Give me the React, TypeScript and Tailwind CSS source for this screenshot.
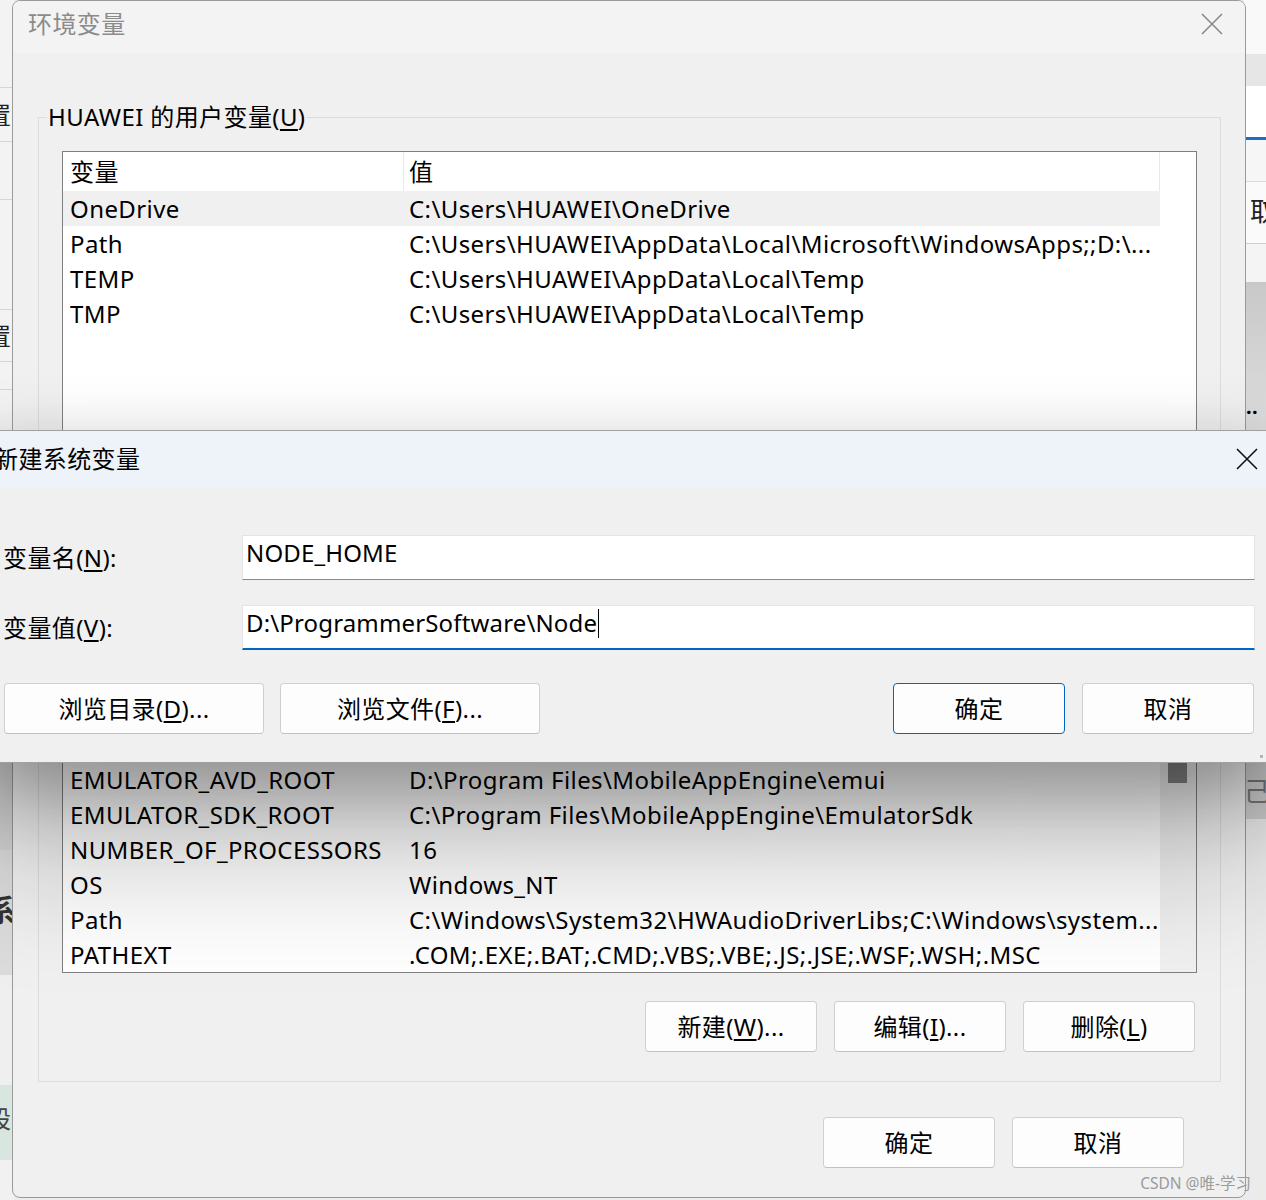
import React from 'react';

const F = "font-['Noto_Sans','Noto_Sans_CJK_SC',sans-serif]";

const userRows: [string, string][] = [
  ['OneDrive', 'C:\\Users\\HUAWEI\\OneDrive'],
  ['Path', 'C:\\Users\\HUAWEI\\AppData\\Local\\Microsoft\\WindowsApps;;D:\\...'],
  ['TEMP', 'C:\\Users\\HUAWEI\\AppData\\Local\\Temp'],
  ['TMP', 'C:\\Users\\HUAWEI\\AppData\\Local\\Temp'],
];

const systemRows: [string, string][] = [
  ['ComSpec', 'C:\\Windows\\system32\\cmd.exe'],
  ['DriverData', 'C:\\Windows\\System32\\Drivers\\DriverData'],
  ['EMULATOR_ADB', 'D:\\Program Files\\MobileAppEngine\\adb'],
  ['EMULATOR_ADB_PATH', 'D:\\Program Files\\MobileAppEngine'],
  ['EMULATOR_APP_ROOT', 'D:\\Program Files\\MobileAppEngine'],
  ['EMULATOR_AVD_ROOT', 'D:\\Program Files\\MobileAppEngine\\emui'],
  ['EMULATOR_SDK_ROOT', 'C:\\Program Files\\MobileAppEngine\\EmulatorSdk'],
  ['NUMBER_OF_PROCESSORS', '16'],
  ['OS', 'Windows_NT'],
  ['Path', 'C:\\Windows\\System32\\HWAudioDriverLibs;C:\\Windows\\system...'],
  ['PATHEXT', '.COM;.EXE;.BAT;.CMD;.VBS;.VBE;.JS;.JSE;.WSF;.WSH;.MSC'],
];

const CloseIcon = ({ color }: { color: string }) => (
  <svg width="22" height="22" viewBox="0 0 22 22">
    <path d="M1 1L21 21M21 1L1 21" stroke={color} strokeWidth="1.6" fill="none" />
  </svg>
);

const Btn = ({ children, w, primary }: { children: React.ReactNode; w: string; primary?: boolean }) => (
  <button
    className={`${w} flex h-[51px] shrink-0 items-center justify-center rounded-[4px] border bg-[#fdfdfd] text-[24px] text-black ${
      primary ? 'border-[#0067c0]' : 'border-[#d0d0d0] border-b-[#c2c2c2]'
    }`}
  >
    {children}
  </button>
);

const ListBox = ({
  rows,
  height,
  selected,
  scroll,
}: {
  rows: [string, string][];
  height: string;
  selected?: number;
  scroll?: boolean;
}) => (
  <div className={`${height} flex overflow-hidden border border-[#7f7f7f] bg-white text-[24px] text-black`}>
    <div className="w-[1097px] shrink-0">
      <div className="flex h-[39px] items-center border-r border-[#e8e8e8]">
        <div className="flex h-full w-[341px] items-center border-r border-[#e8e8e8] pl-[7px]">变量</div>
        <div className="pl-[5px]">值</div>
      </div>
      {rows.map(([k, v], i) => (
        <div key={k + i} className={`flex h-[35px] items-center whitespace-nowrap ${i === selected ? 'bg-[#f0f0f0]' : ''}`}>
          <div className="w-[341px] shrink-0 pl-[7px]">{k}</div>
          <div className="pl-[5px]">{v}</div>
        </div>
      ))}
    </div>
    <div className={`relative flex-1 ${scroll ? 'bg-[#f0f0f0]' : ''}`}>
      {scroll && <div className="absolute left-[8px] top-[150px] h-[85px] w-[19px] bg-[#858585]" />}
    </div>
  </div>
);

export default function App() {
  return (
    <div className={`relative h-[1200px] w-[1266px] overflow-hidden bg-[#ececec] tracking-[0.4px] ${F}`}>
      {/* window behind, left edge */}
      <div className="absolute left-0 top-0 flex h-full w-[14px] flex-col bg-[#f3f3f3] text-[24px] text-[#222]">
        <div className="h-[88px] border-b border-[#d6d6d6]" />
        <div className="ml-[-13px] h-[54px] border-b border-[#d6d6d6] leading-[54px]">置</div>
        <div className="h-[58px] border-b border-[#d6d6d6]" />
        <div className="h-[110px] border-b border-[#d6d6d6]" />
        <div className="ml-[-13px] h-[52px] border-b border-[#d6d6d6] leading-[52px]">置</div>
        <div className="h-[28px] border-b border-[#d6d6d6]" />
        <div className="h-[370px]" />
        <div className="h-[90px] bg-[#d4d4d4]" />
        <div className="ml-[-14px] h-[125px] bg-[#dcdcdc] pt-[40px] text-[30px] font-bold leading-[40px] text-[#333]">系</div>
        <div className="h-[110px] bg-[#efefef]" />
        <div className="ml-[-13px] h-[75px] bg-[#d8e6df] pt-[14px] leading-[40px] text-[#444]">設</div>
        <div className="flex-1 bg-[#f1f1f1]" />
      </div>

      {/* window behind, right edge */}
      <div className="absolute right-0 top-0 flex h-full w-[22px] flex-col bg-[#f7f7f7]">
        <div className="h-[54px] bg-[#f9f9f9]" />
        <div className="h-[32px] bg-[#e6e6e6]" />
        <div className="h-[51px] bg-white" />
        <div className="h-[3px] bg-[#1a6fc4]" />
        <div className="h-[42px] border-b border-[#dcdcdc] bg-[#f6f6f6]" />
        <div className="h-[62px] border-b border-[#d0d0d0] bg-[#fafafa] pl-[6px] font-['Liberation_Serif','Noto_Sans_CJK_SC',serif] text-[26px] leading-[62px] text-[#222]">取</div>
        <div className="h-[38px] bg-[#f4f4f4]" />
        <div className="h-[148px] bg-gradient-to-b from-[#c8c8c8] to-[#dedede] pl-[2px] pt-[115px] text-[20px] font-bold leading-[20px]">..</div>
        <div className="h-[333px]" />
        <div className="h-[56px] bg-[#cfcfcf] text-[26px] leading-[56px] text-[#777]">己</div>
        <div className="flex-1 bg-[#ebebeb]" />
      </div>

      {/* 环境变量 dialog */}
      <div className="absolute left-[12px] top-0 flex h-[1198px] w-[1234px] flex-col overflow-hidden rounded-[8px] border border-[#9a9a9a] bg-[#f0f0f0] text-black">
        <div className="flex h-[52px] shrink-0 items-center justify-between bg-[#f3f3f3] pb-[6px] pl-[15px] pr-[22px]">
          <span className="text-[24px] text-[#8b8b8b]">环境变量</span>
          <CloseIcon color="#8a8a8a" />
        </div>
        <div className="flex flex-1 flex-col pl-[25px] pr-[24px]">
          <div className="relative mt-[64px] border border-[#dcdcdc] px-[23px] pb-[20px] pt-[33px]">
            <span className="absolute left-[8px] top-[-18px] bg-[#f0f0f0] px-[1px] text-[24px] leading-[34px]">
              HUAWEI 的用户变量(<span className="underline underline-offset-[3px]">U</span>)
            </span>
            <ListBox rows={userRows} height="h-[300px]" selected={0} />
          </div>

          <div className="relative mt-[41px] border border-[#dcdcdc] px-[23px] pb-[29px] pt-[33px]">
            <span className="absolute left-[8px] top-[-18px] bg-[#f0f0f0] px-[1px] text-[24px] leading-[34px]">
              系统变量(<span className="underline underline-offset-[3px]">S</span>)
            </span>
            <ListBox rows={systemRows} height="h-[426px]" scroll />
            <div className="mr-[2px] mt-[28px] flex justify-end gap-[17px]">
              <Btn w="w-[172px]">
                新建(<span className="underline underline-offset-[3px]">W</span>)...
              </Btn>
              <Btn w="w-[172px]">
                编辑(<span className="underline underline-offset-[3px]">I</span>)...
              </Btn>
              <Btn w="w-[172px]">
                删除(<span className="underline underline-offset-[3px]">L</span>)
              </Btn>
            </div>
          </div>

          <div className="mr-[37px] mt-[35px] flex justify-end gap-[17px]">
            <Btn w="w-[172px]">确定</Btn>
            <Btn w="w-[172px]">取消</Btn>
          </div>
        </div>
      </div>

      {/* 新建系统变量 dialog */}
      <div className="absolute left-[-22px] top-[430px] w-[1300px] border border-[#a0a0a0] bg-[#f0f0f0] text-black shadow-[0_25px_70px_rgba(0,0,0,0.3),0_100px_130px_rgba(0,0,0,0.22)]">
        <div className="flex h-[56px] items-center justify-between bg-[#eef2f9] pl-[15px] pr-[19px]">
          <span className="text-[24px]">新建系统变量</span>
          <CloseIcon color="#111" />
        </div>
        <div className="pb-[28px] pl-[24px] pr-[22px] pt-[48px]">
          <div className="flex h-[45px] items-center">
            <div className="w-[239px] shrink-0 text-[24px]">
              变量名(<span className="underline underline-offset-[3px]">N</span>):
            </div>
            <div className="flex h-full flex-1 items-center border border-[#e4e4e4] border-b-[#8a8a8a] bg-white pb-[9px] pl-[3px] text-[24px] tracking-[0.15px]">
              NODE_HOME
            </div>
          </div>
          <div className="mt-[25px] flex h-[45px] items-center">
            <div className="w-[239px] shrink-0 text-[24px]">
              变量值(<span className="underline underline-offset-[3px]">V</span>):
            </div>
            <div className="flex h-full flex-1 items-center border border-[#e4e4e4] border-b-2 border-b-[#0067c0] bg-white pb-[8px] pl-[3px] text-[24px] tracking-[0.15px]">
              D:\ProgrammerSoftware\Node
              <span className="ml-[1px] h-[29px] w-px bg-black" />
            </div>
          </div>
          <div className="mt-[33px] flex">
            <div className="ml-[1px] flex gap-[16px]">
              <Btn w="w-[260px]">
                浏览目录(<span className="underline underline-offset-[3px]">D</span>)...
              </Btn>
              <Btn w="w-[260px]">
                浏览文件(<span className="underline underline-offset-[3px]">F</span>)...
              </Btn>
            </div>
            <div className="ml-auto mr-[1px] flex gap-[17px]">
              <Btn w="w-[172px]" primary>
                确定
              </Btn>
              <Btn w="w-[172px]">取消</Btn>
            </div>
          </div>
        </div>
        <div className="absolute bottom-[4px] right-[14px] h-[3px] w-[3px] bg-[#b4b4b4]" />
      </div>

      {/* watermark */}
      <div className="absolute bottom-[7px] right-[15px] text-[15.5px] leading-[20px] tracking-normal text-[#9b9b9b]">CSDN @唯-学习</div>
    </div>
  );
}
